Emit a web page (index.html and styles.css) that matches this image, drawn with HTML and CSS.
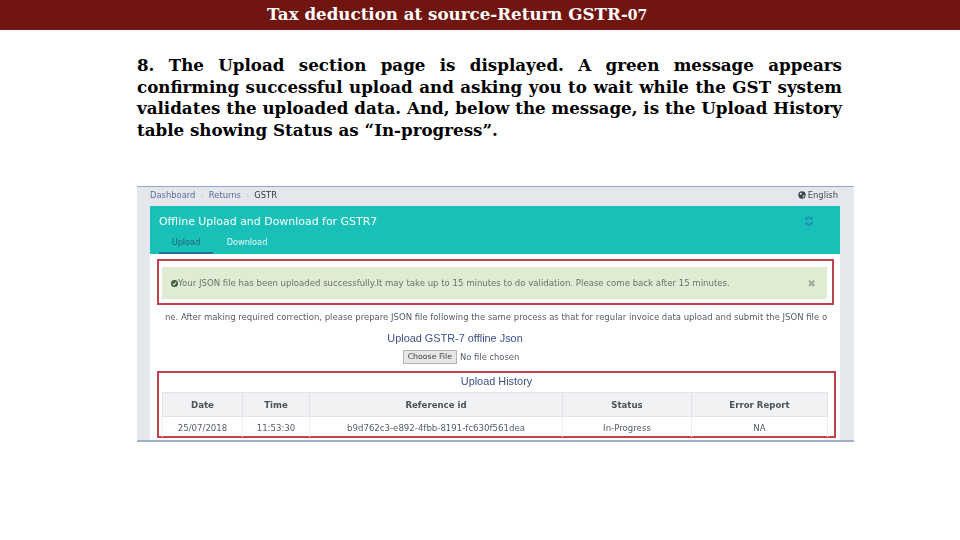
FILE: index.html
```html
<!DOCTYPE html>
<html lang="en">
<head>
<meta charset="utf-8">
<title>Tax deduction at source-Return GSTR-07</title>
<link rel="stylesheet" href="styles.css">
</head>
<body>
<header class="title-bar"><h1 class="title">Tax deduction at source-Return GSTR-<span class="oldstyle">07</span></h1></header>
<p class="lead">8. The Upload section page is displayed. A green message appears confirming successful upload and asking you to wait while the GST system validates the uploaded data. And, below the message, is the Upload History table showing Status as “In-progress”.</p>
<figure class="shot">
  <div class="crumbs">
    <div class="crumb-list"><span>Dashboard</span><i>›</i><span>Returns</span><i>›</i><b>GSTR</b></div>
    <div class="lang">
      <svg class="globe" viewBox="0 0 10 10" width="8" height="8"><circle cx="5" cy="5" r="4.6" fill="#3a4450"/><path d="M2 3l2-1 1 2-2 1zM6 6l2-1 0 2-2 1z" fill="#e4e8ec"/></svg>
      <span>English</span>
    </div>
  </div>
  <div class="panel">
    <div class="teal">
      <div class="teal-top">
        <h2 class="panel-title">Offline Upload and Download for GSTR7</h2>
        <svg class="refresh" viewBox="0 0 12 12" width="10" height="10"><path d="M2 5a4 4 0 0 1 7-2M10 7a4 4 0 0 1-7 2" fill="none" stroke="#2a86b8" stroke-width="2"/><path d="M10.500 1v3.500H7zM1.500 11V7.500H5z" fill="#2a86b8"/></svg>
      </div>
      <div class="tabs"><span class="tab active">Upload</span><span class="tab tab-next">Download</span></div>
    </div>
    <section class="red-box box-alert">
      <div class="alert">
        <svg class="check" viewBox="0 0 10 10" width="7" height="7"><circle cx="5" cy="5" r="5" fill="#3f5a3f"/><path d="M2.500 5l2 2 3-4" fill="none" stroke="#dfecd3" stroke-width="1.500"/></svg>
        <span>Your JSON file has been uploaded successfully.It may take up to 15 minutes to do validation. Please come back after 15 minutes.</span>
        <span class="close">✖</span>
      </div>
    </section>
    <div class="note"><span>ne. After making required correction, please prepare JSON file following the same process as that for regular invoice data upload and submit the JSON file o</span></div>
    <div class="upload-title">Upload GSTR-7 offline Json</div>
    <div class="file-row"><span class="file-btn">Choose File</span><span>No file chosen</span></div>
    <section class="red-box box-table">
      <div class="history-title">Upload History</div>
      <table class="history">
        <colgroup><col class="c1"><col class="c2"><col class="c3"><col class="c4"><col class="c5"></colgroup>
        <thead><tr><th>Date</th><th>Time</th><th>Reference id</th><th>Status</th><th>Error Report</th></tr></thead>
        <tbody><tr><td>25/07/2018</td><td>11:53:30</td><td>b9d762c3-e892-4fbb-8191-fc630f561dea</td><td>In-Progress</td><td>NA</td></tr></tbody>
      </table>
    </section>
  </div>
</figure>
</body>
</html>
```
FILE: styles.css
```css
* { box-sizing: border-box; }
html, body { margin: 0; padding: 0; }
body { width: 960px; height: 540px; overflow: hidden; background: #fff; font-family: "DejaVu Serif", serif; }

.title-bar { height: 30px; background: #701510; padding-left: 267px; }
.title { margin: 0; color: #fff; font: bold 16.700px/29px "DejaVu Serif", serif; white-space: nowrap; }
.oldstyle { font-size: 14px; }

.lead { width: 705px; margin: 25px 0 0 137px; color: #000; font: bold 16.700px/21.600px "DejaVu Serif", serif; text-align: justify; }

.shot { width: 717px; height: 256px; margin: 45px 0 0 137px; padding: 0 14px 0 13px; background: #e4e8ec; border-top: 1px solid #8fa6c8; border-bottom: 2px solid #9fb0c4; filter: blur(0.4px); font-family: "DejaVu Sans", sans-serif; overflow: hidden; }

.crumbs { height: 19px; padding-bottom: 3px; display: flex; justify-content: space-between; align-items: center; font-size: 8.400px; color: #5a6f9a; }
.crumb-list { display: flex; gap: 5px; align-items: center; }
.crumb-list i { font-style: normal; color: #c0c6cc; }
.crumb-list b { font-weight: normal; color: #333a40; }
.lang { display: flex; align-items: center; gap: 2px; margin-right: 2px; color: #444c54; }
.globe { display: block; }

.panel { background: #fff; height: 236px; }
.teal { height: 48px; background: #18c0b8; padding: 0 9px; border-bottom: 2px solid #18c0b8; }
.teal-top { height: 30px; display: flex; justify-content: space-between; align-items: center; padding-right: 17px; }
.panel-title { margin: 0; font-size: 10.950px; font-weight: normal; color: #fff; white-space: nowrap; }
.refresh { display: block; }
.tabs { display: flex; height: 18px; }
.tab { font-size: 8.200px; color: #eafaf8; width: 54px; text-align: center; line-height: 12px; }
.tab-next { margin-left: 7px; }
.tab.active { color: #1f5f78; border-bottom: 2px solid #2f6d90; }

.red-box { border: 2px solid #c0404c; margin-left: 7px; }
.box-alert { width: 677px; height: 46px; margin-top: 5px; padding: 6px 5px 4px 3px; }
.alert { height: 32px; background: #dfecd3; display: flex; align-items: center; padding: 0 11px 0 9px; font-size: 8.570px; color: #66736a; white-space: nowrap; }
.check { flex: none; }
.close { margin-left: auto; color: #a6aca2; font-size: 10px; }

.note { margin: 6px 0 0 14px; width: 664px; height: 14px; display: flex; justify-content: center; font-size: 8.500px; line-height: 12px; color: #555c64; white-space: nowrap; }
.upload-title { margin-top: 6px; padding-right: 80px; text-align: center; font: 10.900px/14px "Liberation Sans", sans-serif; color: #3d4f85; }
.file-row { margin-top: 5px; padding-right: 68px; height: 14px; display: flex; justify-content: center; align-items: center; gap: 3px; font-size: 8.400px; color: #555c64; }
.file-btn { background: #e6e6e6; border: 1px solid #b4b4b4; padding: 1px 4px; font-size: 7.800px; line-height: 10px; color: #444; }

.box-table { width: 679px; height: 67px; margin-top: 7px; padding: 0 3px; }
.history-title { height: 19px; text-align: center; font: 10.900px/17px "Liberation Sans", sans-serif; color: #3d4f85; }
.history { width: 665px; table-layout: fixed; border-collapse: collapse; font-size: 8.600px; color: #555c64; }
.c1 { width: 80px; } .c2 { width: 67px; } .c3 { width: 253px; } .c4 { width: 129px; } .c5 { width: 136px; }
.history th { height: 24px; padding: 0; background: #f1f2f4; border: 1px solid #e2e4e8; font-weight: bold; color: #4c5258; }
.history td { height: 20px; padding: 1px 0 0; text-align: center; border: 1px solid #eceef0; border-bottom: 0; }
```
